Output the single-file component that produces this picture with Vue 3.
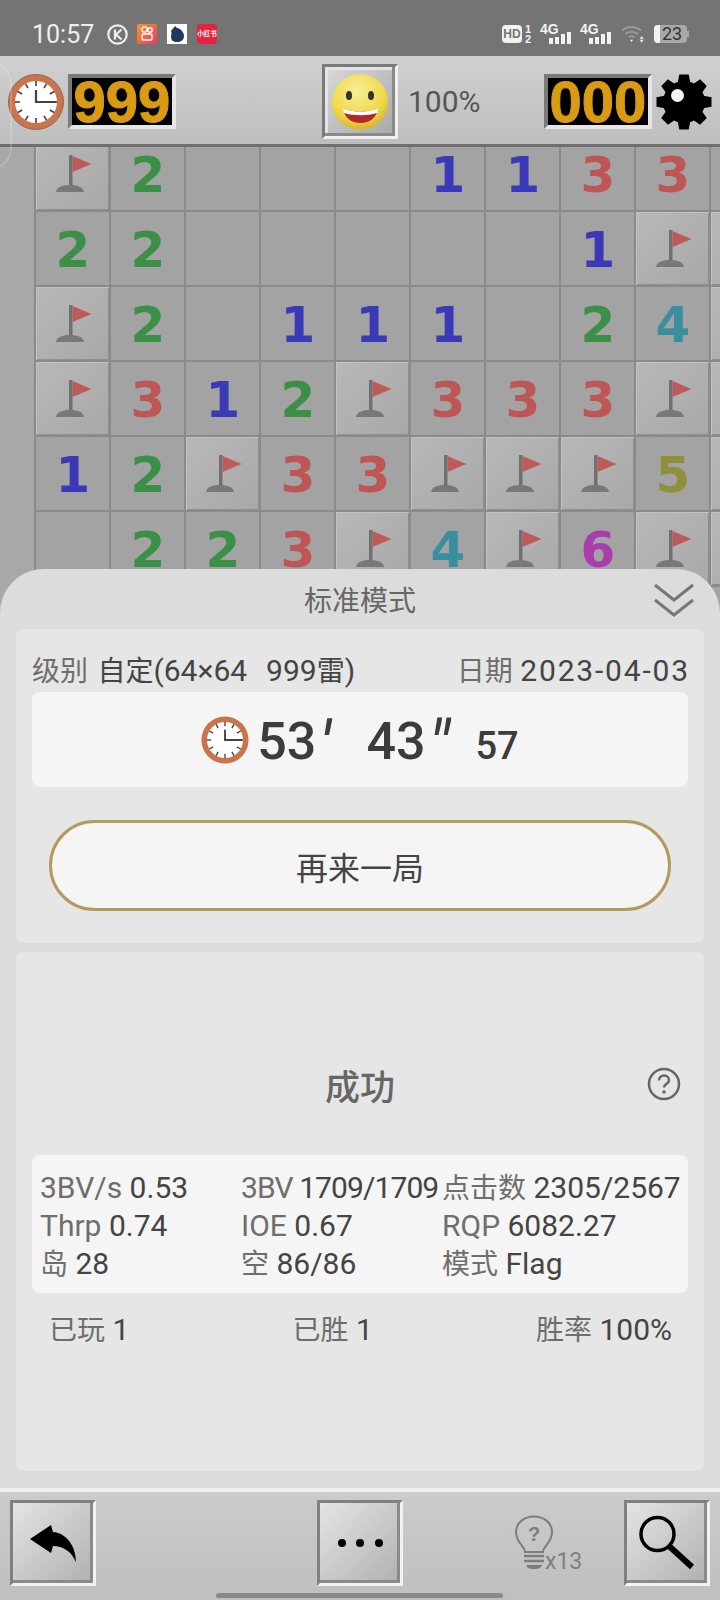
<script setup>
const F = 'F'
const rows = [
  [F, 2, 0, 0, 0, 1, 1, 3, 3, 0],
  [2, 2, 0, 0, 0, 0, 0, 1, F, F],
  [F, 2, 0, 1, 1, 1, 0, 2, 4, F],
  [F, 3, 1, 2, F, 3, 3, 3, F, F],
  [1, 2, F, 3, 3, F, F, F, 5, F],
  [0, 2, 2, 3, F, 4, F, 6, F, F],
  [0, 0, 0, 0, 0, 0, 0, 0, 0, 0],
]
const cells = rows.flat()

const ticks = Array.from({ length: 12 }, (_, i) => i * 30)
const teeth = Array.from({ length: 8 }, (_, i) => i * 45)

const stats = [
  ['3BV/s', '0.53'],
  ['3BV', '1709/1709'],
  ['点击数', '2305/2567'],
  ['Thrp', '0.74'],
  ['IOE', '0.67'],
  ['RQP', '6082.27'],
  ['岛', '28'],
  ['空', '86/86'],
  ['模式', 'Flag'],
]

// chinese labels sit a bit smaller than the latin ones
const isCn = s => /[^\x00-\x7f]/.test(s)
</script>

<template>
  <div class="screen">
    <div class="statusbar">
      <span class="time">10:57</span>
      <svg class="k-icon" width="21" height="21" viewBox="0 0 21 21">
        <circle cx="10.5" cy="10.5" r="9.2" fill="none" stroke="#eee" stroke-width="2.2" />
        <path d="M8 5.5v10M14.500 5.500l-5.500 5 5.500 5" fill="none" stroke="#eee" stroke-width="2.200" />
      </svg>
      <svg class="app-icon" width="20" height="20" viewBox="0 0 20 20">
        <defs>
          <linearGradient id="ks" x1="0" y1="0" x2="1" y2="1">
            <stop offset="0" stop-color="#f59a2c" />
            <stop offset="1" stop-color="#ee3560" />
          </linearGradient>
        </defs>
        <rect width="20" height="20" rx="2" fill="url(#ks)" />
        <circle cx="7.500" cy="5.500" r="2.600" fill="none" stroke="#fff" stroke-width="1.400" />
        <circle cx="13" cy="6" r="2.200" fill="none" stroke="#fff" stroke-width="1.400" />
        <rect x="5" y="10" width="10" height="6" rx="1.500" fill="none" stroke="#fff" stroke-width="1.400" />
      </svg>
      <svg class="app-icon" width="20" height="20" viewBox="0 0 20 20">
        <rect width="20" height="20" fill="#fff" />
        <path d="M4 7c1-2 3-3 4-5l2 2c3 0 7 4 7 8s-3 6-7 6-6-2-6-5c0-2 1-4 0-6z" fill="#1d3b5e" />
      </svg>
      <div class="red-icon">小红书</div>

      <div class="status-right">
        <div class="hd">HD</div>
        <div class="sim-no"><span>1</span><span>2</span></div>
        <div class="net">
          <span class="net-label">4G</span>
          <span class="bars"><i style="height: 6px"></i><i style="height: 7px"></i><i style="height: 10px"></i><i style="height: 12px"></i></span>
        </div>
        <div class="net net-second">
          <span class="net-label">4G</span>
          <span class="bars"><i style="height: 6px"></i><i style="height: 7px"></i><i style="height: 10px"></i><i style="height: 12px"></i></span>
        </div>
        <svg class="wifi" width="25" height="20" viewBox="0 0 26 20">
          <path d="M1 6.500c5.500-5 14.500-5 20 0M4.500 10c3.500-3 9.500-3 13 0M8 13.500c1.800-1.500 4.200-1.500 6 0" fill="none" stroke="#9a9a9a" stroke-width="2" />
          <path d="M9.500 16h3l-1.500 2.500z" fill="#eee" />
          <path d="M21.500 12l2 3h-4zM21.500 19l2-3h-4z" fill="#eee" />
        </svg>
        <div class="battery">
          <span class="battery-level"></span>
          <span class="battery-num">23</span>
          <span class="battery-tip"></span>
        </div>
      </div>
    </div>

    <div class="toolbar">
      <svg class="clock" width="56" height="56" viewBox="0 0 56 56">
        <circle cx="28" cy="28" r="27.500" fill="#c9744c" stroke="#8f6a55" stroke-width="1" />
        <circle cx="28" cy="28" r="21" fill="#fff" />
        <rect v-for="t in ticks" :key="t" x="27.200" y="7" width="1.600" height="5" fill="#444" :transform="`rotate(${t} 28 28)`" />
        <path d="M28 16v12h20" fill="none" stroke="#444" stroke-width="2.200" />
      </svg>
      <div class="counter"><span>999</span></div>

      <div class="smile-btn">
        <svg width="60" height="60" viewBox="0 0 60 60">
          <defs>
            <radialGradient id="face" cx="0.45" cy="0.3" r="0.75">
              <stop offset="0" stop-color="#f8ee94" />
              <stop offset="0.65" stop-color="#f0d84a" />
              <stop offset="1" stop-color="#d6ac2a" />
            </radialGradient>
          </defs>
          <circle cx="30" cy="30" r="28" fill="url(#face)" />
          <ellipse cx="19" cy="23.500" rx="3" ry="4.500" fill="#333" />
          <ellipse cx="41" cy="23.500" rx="3" ry="4.500" fill="#333" />
          <path d="M13 36c10 5 25 5 35 0-1 9-8 15-17.500 15S14 45 13 36z" fill="#b3282a" />
          <path d="M13 36c10 5 25 5 35 0 0 2-.5 3.500-1 5-10 3-23 3-33 0-.5-1.500-1-3-1-5z" fill="#fff" />
        </svg>
      </div>
      <span class="percent">100%</span>

      <div class="counter counter-right"><span>000</span></div>
      <svg class="gear" width="56" height="56" viewBox="0 0 56 56">
        <circle cx="28" cy="28" r="21" fill="#000" />
        <path v-for="t in teeth" :key="t" d="M21.500 10l1.800-9.500h9.400l1.800 9.500z" fill="#000" :transform="`rotate(${t} 28 28)`" />
        <circle cx="21.500" cy="21.500" r="6.500" fill="#f3f3f3" />
      </svg>
    </div>

    <div class="main">
      <div class="board">
        <div
          v-for="(c, i) in cells"
          :key="i"
          class="cell"
          :class="{ raised: c === F }"
        >
          <svg v-if="c === F" width="75" height="75" viewBox="0 0 75 75">
            <rect x="35" y="20" width="3.500" height="30" fill="#707070" />
            <path d="M38.500 21l19 8-19 8z" fill="#bd5b5b" />
            <path d="M22 57c1-5 6-7 14-7s13 2 14 7z" fill="#787878" />
          </svg>
          <span v-else-if="c" :class="`n${c}`">{{ c }}</span>
        </div>
      </div>

      <div class="sheet">
        <div class="sheet-head">
          <span class="sheet-title">标准模式</span>
          <svg class="chevrons" width="40" height="36" viewBox="0 0 40 36">
            <path d="M1 3l19 15 19-15M1 18l19 15 19-15" fill="none" stroke="#777" stroke-width="3" />
          </svg>
        </div>

        <div class="card card-top">
          <div class="info-row">
            <span class="level"><em class="cn">级别</em> <span class="cn">自定</span>(64×64&nbsp;&nbsp;999<span class="cn">雷</span>)</span>
            <span><em class="cn">日期</em> <span class="date">2023-04-03</span></span>
          </div>
          <div class="timer">
            <svg class="timer-clock" width="48" height="48" viewBox="0 0 56 56">
              <circle cx="28" cy="28" r="27.500" fill="#c9744c" />
              <circle cx="28" cy="28" r="21" fill="#fff" />
              <rect v-for="t in ticks" :key="t" x="27.200" y="7" width="1.600" height="5" fill="#444" :transform="`rotate(${t} 28 28)`" />
              <path d="M28 16v12h20" fill="none" stroke="#444" stroke-width="2.200" />
            </svg>
            <span class="t-big">53</span><span class="t-mark">′</span>
            <span class="t-big">43</span><span class="t-mark">″</span>
            <span class="t-small">57</span>
          </div>
          <button class="again">再来一局</button>
        </div>

        <div class="card card-bottom">
          <div class="result-row">
            <span class="result">成功</span>
            <svg class="help" width="34" height="34" viewBox="0 0 34 34">
              <circle cx="17" cy="17" r="15" fill="none" stroke="#666" stroke-width="2.500" />
              <path d="M12 13.500c0-3 2.200-5 5-5s5 2 5 4.700c0 3.500-5 3.800-5 7.300" fill="none" stroke="#666" stroke-width="2.500" />
              <circle cx="17" cy="25" r="1.800" fill="#666" />
            </svg>
          </div>
          <div class="stats">
            <div v-for="s in stats" :key="s[0]" class="stat" :class="{ tight: s[0] === '3BV' }"><em :class="{ cn: isCn(s[0]) }">{{ s[0] }}</em> {{ s[1] }}</div>
          </div>
          <div class="totals">
            <span><em class="cn">已玩</em> 1</span>
            <span><em class="cn">已胜</em> 1</span>
            <span><em class="cn">胜率</em> 100%</span>
          </div>
        </div>
      </div>
    </div>

    <div class="bottombar">
      <div class="tool-btn">
        <svg width="52" height="40" viewBox="0 0 52 40">
          <path d="M3 16L24 2l2 7c14 1 23 15 23 30-5-11-13-16-23-16l-2 7z" fill="#000" />
        </svg>
      </div>
      <div class="tool-btn dots">
        <i></i><i></i><i></i>
      </div>
      <div class="hint">
        <svg width="40" height="56" viewBox="0 0 40 56">
          <path d="M11 37c0-6-9-9-9-20C2 8 10 1.500 20 1.500S38 8 38 17c0 11-9 14-9 20z" fill="none" stroke="#7d7d7d" stroke-width="2" />
          <path d="M10 41h20M10 46h20" stroke="#7d7d7d" stroke-width="2.500" />
          <path d="M12 50h16c-1 3-3 4-8 4s-7-1-8-4z" fill="#7d7d7d" />
          <text x="20" y="26" class="hint-q">?</text>
        </svg>
        <span class="hint-count">x13</span>
      </div>
      <div class="tool-btn">
        <svg width="58" height="58" viewBox="0 0 58 58">
          <circle cx="19.500" cy="20" r="16.500" fill="none" stroke="#000" stroke-width="3.500" />
          <path d="M31 32l23 21" stroke="#000" stroke-width="6" />
        </svg>
      </div>
      <div class="home-indicator"></div>
    </div>

    <div class="edge-arc"></div>
  </div>
</template>

<style scoped>
.screen {
  position: relative;
  width: 720px;
  height: 1600px;
  display: flex;
  flex-direction: column;
  overflow: hidden;
  font-family: Roboto, "Noto Sans CJK SC", sans-serif;
  color: #444;
}

em {
  font-style: normal;
  color: #6e6e6e;
}

.cn {
  font-size: 28px;
}

/* status bar */
.statusbar {
  height: 56px;
  flex: none;
  display: flex;
  align-items: center;
  padding: 12px 0 0 32px;
  box-sizing: border-box;
  background: #747474;
  color: #eee;
}

.time {
  font-size: 25px;
  width: 75px;
}

.k-icon {
  margin-right: 9px;
}

.app-icon {
  margin-right: 10px;
}

.red-icon {
  width: 20px;
  height: 20px;
  border-radius: 4px;
  background: #e9213f;
  color: #fff;
  font-size: 6.5px;
  font-weight: 700;
  line-height: 20px;
  text-align: center;
  white-space: nowrap;
}

.status-right {
  margin-left: auto;
  display: flex;
  align-items: center;
  padding-right: 33px;
}

.hd {
  width: 20px;
  height: 18px;
  border-radius: 4px;
  background: #f2f2f2;
  color: #747474;
  font: bold 12px/18px "Liberation Sans", sans-serif;
  text-align: center;
}

.sim-no {
  display: flex;
  flex-direction: column;
  font: bold 11px/10px "Liberation Sans", sans-serif;
  width: 8px;
  margin-left: 2px;
  text-align: center;
  color: #f2f2f2;
}

.net {
  position: relative;
  width: 31px;
  height: 20px;
  margin-left: 8px;
}

.net-second {
  margin-left: 9px;
}

.net-label {
  position: absolute;
  left: 0;
  top: -2px;
  font: bold 14px/14px "Liberation Sans", sans-serif;
  color: #f2f2f2;
}

.bars {
  position: absolute;
  right: 0;
  bottom: 0;
  display: flex;
  align-items: flex-end;
  gap: 2px;
}

.bars i {
  width: 4px;
  background: #f2f2f2;
}

.wifi {
  margin-left: 10px;
}

.battery {
  position: relative;
  width: 33px;
  height: 18px;
  margin-left: 8px;
  border-radius: 4px;
  background: #a8a8a8;
  display: flex;
  align-items: center;
}

.battery-level {
  width: 6px;
  height: 18px;
  background: #f2f2f2;
  border-radius: 4px 0 0 4px;
}

.battery-num {
  font-size: 18px;
  line-height: 18px;
  color: #333;
  margin-left: 2px;
}

.battery-tip {
  position: absolute;
  right: -2px;
  top: 6px;
  width: 2px;
  height: 6px;
  background: #a8a8a8;
}

/* top toolbar */
.toolbar {
  height: 91px;
  flex: none;
  box-sizing: border-box;
  border-bottom: 3px solid #6f6f6f;
  background: linear-gradient(#d0d0d0, #bebebe);
  display: flex;
  align-items: center;
  padding: 3px 8px 0;
}

.counter {
  width: 108px;
  height: 55px;
  box-sizing: border-box;
  margin-left: 4px;
  background: #000;
  border: 4px solid;
  border-color: #7a7a7a #e6e6e6 #e6e6e6 #7a7a7a;
  display: flex;
  align-items: center;
  justify-content: center;
}

.counter span {
  font: bold 58px/47px "Liberation Sans", sans-serif;
  color: #d99a14;
  -webkit-text-stroke: 1px #d99a14;
}

.counter-right {
  margin-left: auto;
  margin-right: 4px;
}

.smile-btn {
  width: 76px;
  height: 75px;
  box-sizing: border-box;
  margin-left: 146px;
  border: 3px solid;
  border-color: #7a7a7a #f0f0f0 #f0f0f0 #7a7a7a;
  background: linear-gradient(135deg, #d8d8d8, #a8a8a8);
  box-shadow: inset -3px -3px 0 #8a8a8a, inset 3px 3px 0 #e4e4e4;
  display: flex;
  align-items: center;
  justify-content: center;
}

.percent {
  margin-left: 10px;
  font-size: 30px;
  color: #555;
}

/* board */
.main {
  flex: 1;
  position: relative;
  overflow: hidden;
  background: #a8a8a8;
}

.board {
  margin: -12px 0 0 34px;
  display: grid;
  grid-template-columns: repeat(10, 75px);
  grid-auto-rows: 75px;
}

.cell {
  box-sizing: border-box;
  display: flex;
  align-items: center;
  justify-content: center;
  background: #a3a3a3;
  border-left: 2px solid #8a8a8a;
  border-top: 2px solid #8a8a8a;
  font: bold 50px/75px "DejaVu Sans", sans-serif;
}

.cell span {
  margin: 3px 0 0 1px;
}

.raised {
  background: linear-gradient(135deg, #b8b8b8, #a8a8a8);
  box-shadow: inset 1px 1px 0 #c2c2c2, inset -1px -1px 0 #8f8f8f;
}

.raised svg {
  flex: none;
  margin: -2px 0 0 -2px;
}

.n1 { color: #3a3ab8; }
.n2 { color: #3c8f46; }
.n3 { color: #bf5656; }
.n4 { color: #3a8f9f; }
.n5 { color: #8f8f3c; }
.n6 { color: #a83dab; }

/* faint gesture handle over the left edge */
.edge-arc {
  position: absolute;
  left: -32px;
  top: 62px;
  width: 40px;
  height: 104px;
  border: 2px solid rgba(255, 255, 255, 0.18);
  border-radius: 30px;
}

/* result sheet */
.sheet {
  position: absolute;
  left: 0;
  right: 0;
  bottom: 0;
  top: 422px;
  box-sizing: border-box;
  padding: 0 16px 17px;
  background: #dcdcdc;
  border-radius: 44px 44px 0 0;
  display: flex;
  flex-direction: column;
}

.sheet-head {
  height: 60px;
  flex: none;
  position: relative;
  display: flex;
  align-items: center;
  justify-content: center;
}

.sheet-title {
  font-size: 28px;
  color: #666;
}

.chevrons {
  position: absolute;
  right: 10px;
  top: 13px;
}

.card {
  background: #e6e6e6;
  border-radius: 8px;
  padding: 0 16px;
}

.card-top {
  height: 314px;
  flex: none;
  box-sizing: border-box;
  padding-top: 20px;
}

.card-bottom {
  margin-top: 9px;
  flex: 1;
  padding-top: 114px;
}

.info-row {
  display: flex;
  justify-content: space-between;
  font-size: 30px;
  line-height: 44px;
  height: 44px;
  white-space: nowrap;
}

.level {
  word-spacing: 2px;
}

.date {
  letter-spacing: 1.8px;
  margin-right: -1.8px;
}

.timer {
  height: 95px;
  margin-top: -1px;
  padding-top: 4px;
  box-sizing: border-box;
  background: #f5f5f5;
  border-radius: 8px;
  display: flex;
  align-items: baseline;
  justify-content: center;
  color: #3c3c3c;
  white-space: nowrap;
  line-height: 91px;
}

.timer-clock {
  align-self: center;
  margin-right: 8px;
  margin-top: -4px;
}

.t-big {
  font-size: 52px;
  font-weight: 500;
}

.t-mark {
  font-size: 72px;
  line-height: 40px;
  font-style: italic;
  width: 50px;
  padding-left: 2px;
  box-sizing: border-box;
  transform: translateY(13px);
}

.t-small {
  font-size: 38px;
  font-weight: 500;
}

.again {
  display: block;
  width: 622px;
  height: 91px;
  margin: 33px 0 0 17px;
  box-sizing: border-box;
  border: 3px solid #b19c5c;
  border-radius: 46px;
  background: #f5f5f5;
  font: 32px "Noto Sans CJK SC", sans-serif;
  color: #444;
}

.result-row {
  position: relative;
  text-align: center;
  margin-top: -1px;
}

.result {
  position: absolute;
  left: 0;
  right: 0;
  top: -2px;
  font: 500 35px/44px "Noto Sans CJK SC", sans-serif;
  color: #666;
}

.help {
  position: absolute;
  right: 7px;
  top: 2px;
}

.stats {
  background: #f5f5f5;
  border-radius: 8px;
  box-sizing: border-box;
  height: 138px;
  padding: 14px 0 0 8px;
  margin-top: 90px;
  display: grid;
  grid-template-columns: repeat(3, 201px);
  grid-auto-rows: 38px;
  font-size: 30px;
  line-height: 38px;
  white-space: nowrap;
}

.tight {
  letter-spacing: -0.9px;
}

.totals {
  display: flex;
  justify-content: space-between;
  padding: 0 16px 0 17px;
  margin-top: 16px;
  font-size: 30px;
  line-height: 42px;
}

/* bottom toolbar */
.bottombar {
  height: 112px;
  flex: none;
  box-sizing: border-box;
  border-top: 4px solid #efefef;
  background: linear-gradient(#cbcbcb, #bfbfbf);
  display: flex;
  align-items: flex-start;
  padding: 8px 10px 0;
  position: relative;
}

.tool-btn {
  width: 86px;
  height: 86px;
  flex: none;
  box-sizing: border-box;
  border: 3px solid;
  border-color: #808080 #f2f2f2 #f2f2f2 #808080;
  box-shadow: inset -3px -3px 0 #8a8a8a;
  background: linear-gradient(135deg, #e4e4e4, #b0b0b0);
  display: flex;
  align-items: center;
  justify-content: center;
}

.dots {
  gap: 10.5px;
  margin-left: 221px;
}

.dots i {
  width: 8px;
  height: 8px;
  border-radius: 50%;
  background: #000;
}

.hint {
  position: relative;
  width: 221px;
  height: 86px;
  display: flex;
  padding: 15px 0 0 111px;
  box-sizing: border-box;
}

.hint-q {
  font: bold 20px "Liberation Sans", sans-serif;
  fill: #7d7d7d;
  text-anchor: middle;
}

.hint-count {
  position: absolute;
  left: 142px;
  top: 48px;
  font-size: 23px;
  color: #808080;
}

.home-indicator {
  position: absolute;
  left: 216px;
  bottom: 2px;
  width: 287px;
  height: 5px;
  border-radius: 3px;
  background: #8a8a8a;
}
</style>
